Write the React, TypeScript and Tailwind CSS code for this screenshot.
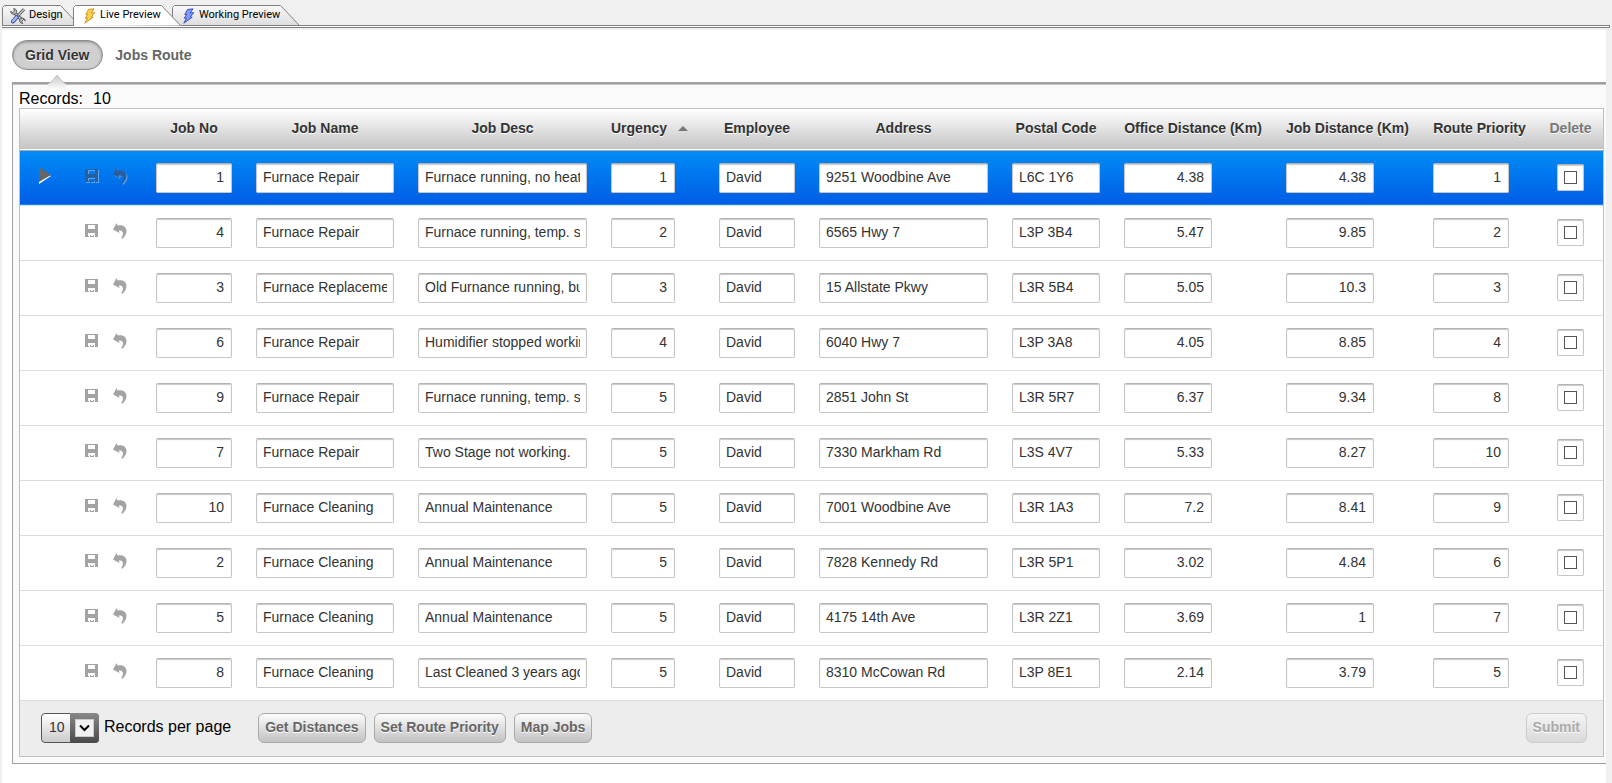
import React, { useState } from 'react';
import clsx from 'clsx';

interface Job {
    no: number;
    name: string;
    desc: string;
    urgency: number;
    employee: string;
    address: string;
    postal: string;
    officeKm: number;
    jobKm: number;
    priority: number;
}

const JOBS: Job[] = [
    { no: 1, name: 'Furnace Repair', desc: 'Furnace running, no heat', urgency: 1, employee: 'David', address: '9251 Woodbine Ave', postal: 'L6C 1Y6', officeKm: 4.38, jobKm: 4.38, priority: 1 },
    { no: 4, name: 'Furnace Repair', desc: 'Furnace running, temp. s', urgency: 2, employee: 'David', address: '6565 Hwy 7', postal: 'L3P 3B4', officeKm: 5.47, jobKm: 9.85, priority: 2 },
    { no: 3, name: 'Furnace Replacement', desc: 'Old Furnance running, bu', urgency: 3, employee: 'David', address: '15 Allstate Pkwy', postal: 'L3R 5B4', officeKm: 5.05, jobKm: 10.3, priority: 3 },
    { no: 6, name: 'Furance Repair', desc: 'Humidifier stopped working', urgency: 4, employee: 'David', address: '6040 Hwy 7', postal: 'L3P 3A8', officeKm: 4.05, jobKm: 8.85, priority: 4 },
    { no: 9, name: 'Furnace Repair', desc: 'Furnace running, temp. s', urgency: 5, employee: 'David', address: '2851 John St', postal: 'L3R 5R7', officeKm: 6.37, jobKm: 9.34, priority: 8 },
    { no: 7, name: 'Furnace Repair', desc: 'Two Stage not working.', urgency: 5, employee: 'David', address: '7330 Markham Rd', postal: 'L3S 4V7', officeKm: 5.33, jobKm: 8.27, priority: 10 },
    { no: 10, name: 'Furnace Cleaning', desc: 'Annual Maintenance', urgency: 5, employee: 'David', address: '7001 Woodbine Ave', postal: 'L3R 1A3', officeKm: 7.2, jobKm: 8.41, priority: 9 },
    { no: 2, name: 'Furnace Cleaning', desc: 'Annual Maintenance', urgency: 5, employee: 'David', address: '7828 Kennedy Rd', postal: 'L3R 5P1', officeKm: 3.02, jobKm: 4.84, priority: 6 },
    { no: 5, name: 'Furnace Cleaning', desc: 'Annual Maintenance', urgency: 5, employee: 'David', address: '4175 14th Ave', postal: 'L3R 2Z1', officeKm: 3.69, jobKm: 1, priority: 7 },
    { no: 8, name: 'Furnace Cleaning', desc: 'Last Cleaned 3 years ago', urgency: 5, employee: 'David', address: '8310 McCowan Rd', postal: 'L3P 8E1', officeKm: 2.14, jobKm: 3.79, priority: 5 },
];

interface Column {
    key: keyof Job;
    label: string;
    col: string;
    field: string;
    numeric?: boolean;
}

const COLUMNS: Column[] = [
    { key: 'no', label: 'Job No', col: 'w-[100px]', field: 'w-[76px]', numeric: true },
    { key: 'name', label: 'Job Name', col: 'w-[162px]', field: 'w-[138px]' },
    { key: 'desc', label: 'Job Desc', col: 'w-[193px]', field: 'w-[169px]' },
    { key: 'urgency', label: 'Urgency', col: 'w-[108px]', field: 'w-[64px]', numeric: true },
    { key: 'employee', label: 'Employee', col: 'w-[100px]', field: 'w-[76px]' },
    { key: 'address', label: 'Address', col: 'w-[193px]', field: 'w-[169px]' },
    { key: 'postal', label: 'Postal Code', col: 'w-[112px]', field: 'w-[88px]' },
    { key: 'officeKm', label: 'Office Distance (Km)', col: 'w-[162px]', field: 'w-[88px]', numeric: true },
    { key: 'jobKm', label: 'Job Distance (Km)', col: 'w-[147px]', field: 'w-[88px]', numeric: true },
    { key: 'priority', label: 'Route Priority', col: 'w-[117px]', field: 'w-[76px]', numeric: true },
];

const ToolsIcon = () => (
    <svg width="16" height="16" viewBox="0 0 16 16" fill="none" aria-hidden="true">
        <path d="M4 4.5l8.500 8" stroke="#555" strokeWidth="3.4" />
        <path d="M4 4.5l8.500 8" stroke="#d0d0d0" strokeWidth="1.6" />
        <path d="M.6 3.200l2 1.400 1.900-1.600L3.600.7a3 3 0 0 1 3 4A3.200 3.200 0 0 1 .6 3.200z" fill="#bbb" stroke="#555" strokeWidth="0.9" />
        <path d="M15.400 12.800l-2-1.200-1.700 1.700 1 2.200a3 3 0 0 1-3-3.900 3.100 3.100 0 0 1 5.700 1.200z" fill="#bbb" stroke="#555" strokeWidth="0.9" />
        <path d="M14 1.300L8 7.800" stroke="#555" strokeWidth="3" />
        <path d="M14 1.400L8.400 7.400" stroke="#ddd" strokeWidth="1.2" />
        <path d="M6.800 9.200L3 13.400" stroke="#3c53a8" strokeWidth="4" strokeLinecap="round" />
        <path d="M6.600 9.200L2.900 13.200" stroke="#a9bdf3" strokeWidth="2.2" strokeLinecap="round" />
    </svg>
);

const BoltIcon = ({ fill, stroke }: { fill: string; stroke: string }) => (
    <svg width="14" height="16" viewBox="0 0 14 16" aria-hidden="true">
        <path d="M5.5 1.5L11 .8 8.2 5l3.6-.4L8.2 9l2 .2L1.8 15.2 4.6 10l-2.4.2L4.8 6.4l-2 .1z" fill={fill} stroke={stroke} strokeWidth="0.9" strokeLinejoin="round" />
    </svg>
);

const SaveIcon = () => (
    <svg width="13" height="13" viewBox="0 0 13 13" fill="currentColor" aria-hidden="true">
        <path fillRule="evenodd" d="M0 0h13v13H0zM3 1v4h7V1zM3 9v3h1v1h1v-2h1v1h2v-1h1v2h1V9z" />
    </svg>
);

const UndoIcon = () => (
    <svg width="14" height="16" viewBox="0 0 14 16" fill="currentColor" aria-hidden="true">
        <path d="M0 6.500L3.500 0l1 2.600C9.500 1.200 13.500 3.800 13.500 8c0 3.200-1.800 5.600-4 7.700L8.200 15c1.500-2.200 2-4 1.600-5.600C9.400 7.600 7.800 7 5.800 7.600L6.600 10z" />
    </svg>
);

interface TabProps {
    label: string;
    width: number;
    active?: boolean;
    className: string;
    children: React.ReactNode;
}

const EditorTab = ({ label, width, active, className, children }: TabProps) => (
    <button type="button" className={clsx('relative flex h-[21px] items-center gap-[3px] text-black', active && 'z-10', className)}>
        <svg className="absolute inset-0" width={width} height="21" aria-hidden="true">
            <defs>
                <linearGradient id="tabFill" x1="0" y1="0" x2="0" y2="1">
                    <stop offset="0" stopColor="#fafafa" />
                    <stop offset="1" stopColor="#dcdcdc" />
                </linearGradient>
            </defs>
            <path
                d={`M.5 21V2.500l2-2h${width - 22}L${width - 0.5} 20.500${active ? '' : 'H.5'}`}
                fill={active ? '#fff' : 'url(#tabFill)'}
                stroke="#808080"
            />
        </svg>
        <span className="relative">{children}</span>
        <span className="relative">{label}</span>
    </button>
);

const fieldStyle =
    'rounded-[2px] border border-[#c6c6c6] border-t-[#b4b4b4] bg-white shadow-[inset_0_1px_1px_#c8c8c8]';

const buttonStyle =
    'h-[30px] rounded-md border bg-linear-to-b px-1.5 pb-0.5 text-sm font-bold [text-shadow:0_1px_0_#fff]';

export default function App() {
    const [selected, setSelected] = useState(0);

    return (
        <div className="flex min-h-screen flex-col bg-[#f0f0f0] font-['Liberation_Sans',Arial,sans-serif] text-[#333]">
            <nav className="mr-0.5 ml-0.5 flex h-[26px] items-end border-b border-[#808080] font-[Roboto,sans-serif] text-[11px]">
                <EditorTab label="Design" width={78} className="-mb-px w-[78px] pl-2">
                    <ToolsIcon />
                </EditorTab>
                <EditorTab label="Live Preview" width={108} active className="-mb-px -ml-[7px] w-[108px] pl-2.5">
                    <BoltIcon fill="#ffd34d" stroke="#d08a10" />
                </EditorTab>
                <EditorTab label="Working Preview" width={128} className="-mb-px -ml-[9px] w-[128px] pl-2.5">
                    <BoltIcon fill="#7f9bff" stroke="#2f49b8" />
                </EditorTab>
            </nav>
            <div className="mr-0.5 ml-0.5 h-0.5 border-r border-b border-[#808080] bg-white" />

            <main className="mt-0.5 mr-1.5 ml-0.5 grow bg-white pt-2.5 pb-5 pl-2.5">
                <div className="flex gap-3">
                    <button
                        type="button"
                        className="h-[30px] rounded-full border border-[#8e8e8e] bg-[#d0d0d0] pr-[13px] pl-3 text-sm font-bold text-[#333] shadow-[inset_0_1px_3px_#888] [text-shadow:0_1px_0_#fff]"
                    >
                        Grid View
                    </button>
                    <button type="button" className="text-sm font-bold text-[#666]">
                        Jobs Route
                    </button>
                </div>

                <section className="relative mt-3 border-t-2 border-b border-l border-[#a0a0a0] bg-[#fafafa] pt-0.5 pr-0.5 pb-1.5 pl-1.5 shadow-[inset_0_1px_0_#c4c4c4]">
                    <svg className="absolute -top-[9px] left-[35px]" width="18" height="14" aria-hidden="true">
                        <path d="M0 9l2-1 7-8 7 8 2 1v5H0z" fill="url(#pointerFill)" />
                        <path d="M2 8l7-7.500L16 8" fill="none" stroke="#c0c0c0" />
                        <defs>
                            <linearGradient id="pointerFill" x1="0" y1="0" x2="0" y2="1">
                                <stop offset="0" stopColor="#c8c8c8" />
                                <stop offset="1" stopColor="#fafafa" />
                            </linearGradient>
                        </defs>
                    </svg>
                    <p className="relative pt-1 text-base leading-[18px] text-black">
                        Records:<span className="ml-2.5">10</span>
                    </p>

                    <div className="border border-[#c0c0c0] bg-white">
                        <table className="w-full table-fixed border-collapse text-sm">
                            <colgroup>
                                <col className="w-[53px]" />
                                <col className="w-[71px]" />
                                {COLUMNS.map((c) => (
                                    <col key={c.key} className={c.col} />
                                ))}
                                <col className="w-[65px]" />
                            </colgroup>
                            <thead>
                                <tr className="h-[41px] border-b border-[#aaa] bg-linear-to-b from-white to-[#c4c4c4] [text-shadow:0_1px_0_#fff]">
                                    <th />
                                    <th />
                                    {COLUMNS.map((c) => (
                                        <th
                                            key={c.key}
                                            scope="col"
                                            className={clsx('p-0 pb-0.5 whitespace-nowrap', c.key === 'urgency' && 'pl-3 text-left')}
                                        >
                                            {c.label}
                                            {c.key === 'urgency' && (
                                                <svg className="ml-[11px] inline-block align-middle" width="10" height="8" aria-hidden="true">
                                                    <path d="M5 0l5 5H0z" fill="#777" />
                                                </svg>
                                            )}
                                        </th>
                                    ))}
                                    <th scope="col" className="p-0 pb-0.5 text-[#777]">
                                        Delete
                                    </th>
                                </tr>
                            </thead>
                            <tbody>
                                {JOBS.map((job, i) => {
                                    const current = i === selected;
                                    return (
                                        <tr
                                            key={job.no}
                                            onClick={() => setSelected(i)}
                                            className={clsx(
                                                'h-[55px] border-b border-[#dcdcdc]',
                                                current ? 'bg-linear-to-b from-[#058cf5] to-[#015de6]' : 'bg-white',
                                            )}
                                        >
                                            <td className="p-0 pb-1 pl-[19px]">
                                                {current && (
                                                    <svg width="13" height="18" aria-hidden="true">
                                                        <path d="M0 2l12 7-12 8z" fill="#fff" />
                                                        <path d="M0 0l12 8-12 7z" fill="#666" />
                                                    </svg>
                                                )}
                                            </td>
                                            <td className="p-0 pb-1 pl-3">
                                                <div
                                                    className={clsx(
                                                        'flex items-center gap-[15px]',
                                                        current
                                                            ? 'text-[#2a5f9f] [filter:drop-shadow(1px_1px_0_#5aa5f5)]'
                                                            : 'text-[#a3a3a3]',
                                                    )}
                                                >
                                                    <button type="button" aria-label="Save">
                                                        <SaveIcon />
                                                    </button>
                                                    <button type="button" aria-label="Undo">
                                                        <UndoIcon />
                                                    </button>
                                                </div>
                                            </td>
                                            {COLUMNS.map((c) => (
                                                <td key={c.key} className="p-0 pl-3">
                                                    <input
                                                        type="text"
                                                        aria-label={c.label}
                                                        defaultValue={job[c.key]}
                                                        className={clsx(
                                                            'block h-[30px] px-1.5 pb-0.5',
                                                            fieldStyle,
                                                            c.field,
                                                            c.numeric && 'pr-[7px] text-right',
                                                        )}
                                                    />
                                                </td>
                                            ))}
                                            <td className="p-0">
                                                <div className={clsx('mx-auto flex size-[27px] items-center justify-center', fieldStyle)}>
                                                    <input
                                                        type="checkbox"
                                                        aria-label="Delete"
                                                        className="size-[13px] appearance-none border border-[#555] bg-white checked:bg-[#555]"
                                                    />
                                                </div>
                                            </td>
                                        </tr>
                                    );
                                })}
                            </tbody>
                        </table>

                        <div className="flex h-[55px] items-center bg-[#ededed] pr-4 pl-[21px]">
                            <div className="relative">
                                <select
                                    id="pageSize"
                                    defaultValue="10"
                                    className="block h-[30px] w-[58px] appearance-none rounded-[4px] border border-[#555] bg-linear-to-b from-white to-[#ccc] pb-0.5 pl-[7px] text-sm"
                                >
                                    <option>10</option>
                                    <option>20</option>
                                    <option>50</option>
                                </select>
                                <span className="pointer-events-none absolute inset-y-0 right-0 flex w-[29px] items-center justify-center rounded-r-[4px] bg-linear-to-b from-[#8a8a8a] to-[#4a4a4a]">
                                    <span className="flex h-[18px] w-[19px] items-center justify-center border border-[#ccc] bg-[#f2f2f2]">
                                        <svg width="11" height="8" fill="none" aria-hidden="true">
                                            <path d="M1 1.500l4.500 4.500L10 1.500" stroke="#000" strokeWidth="2" />
                                        </svg>
                                    </span>
                                </span>
                            </div>
                            <label htmlFor="pageSize" className="ml-[5px] pb-0.5 text-base text-black">
                                Records per page
                            </label>
                            <div className="ml-[27px] flex gap-2">
                                {['Get Distances', 'Set Route Priority', 'Map Jobs'].map((label) => (
                                    <button
                                        key={label}
                                        type="button"
                                        className={clsx(buttonStyle, 'border-[#aaa] from-[#fcfcfc] to-[#c2c2c2] text-[#666]')}
                                    >
                                        {label}
                                    </button>
                                ))}
                            </div>
                            <button
                                type="button"
                                disabled
                                className={clsx(buttonStyle, 'ml-auto border-[#ccc] from-[#f5f5f5] to-[#d9d9d9] text-[#aaa]')}
                            >
                                Submit
                            </button>
                        </div>
                    </div>
                </section>
            </main>
        </div>
    );
}
